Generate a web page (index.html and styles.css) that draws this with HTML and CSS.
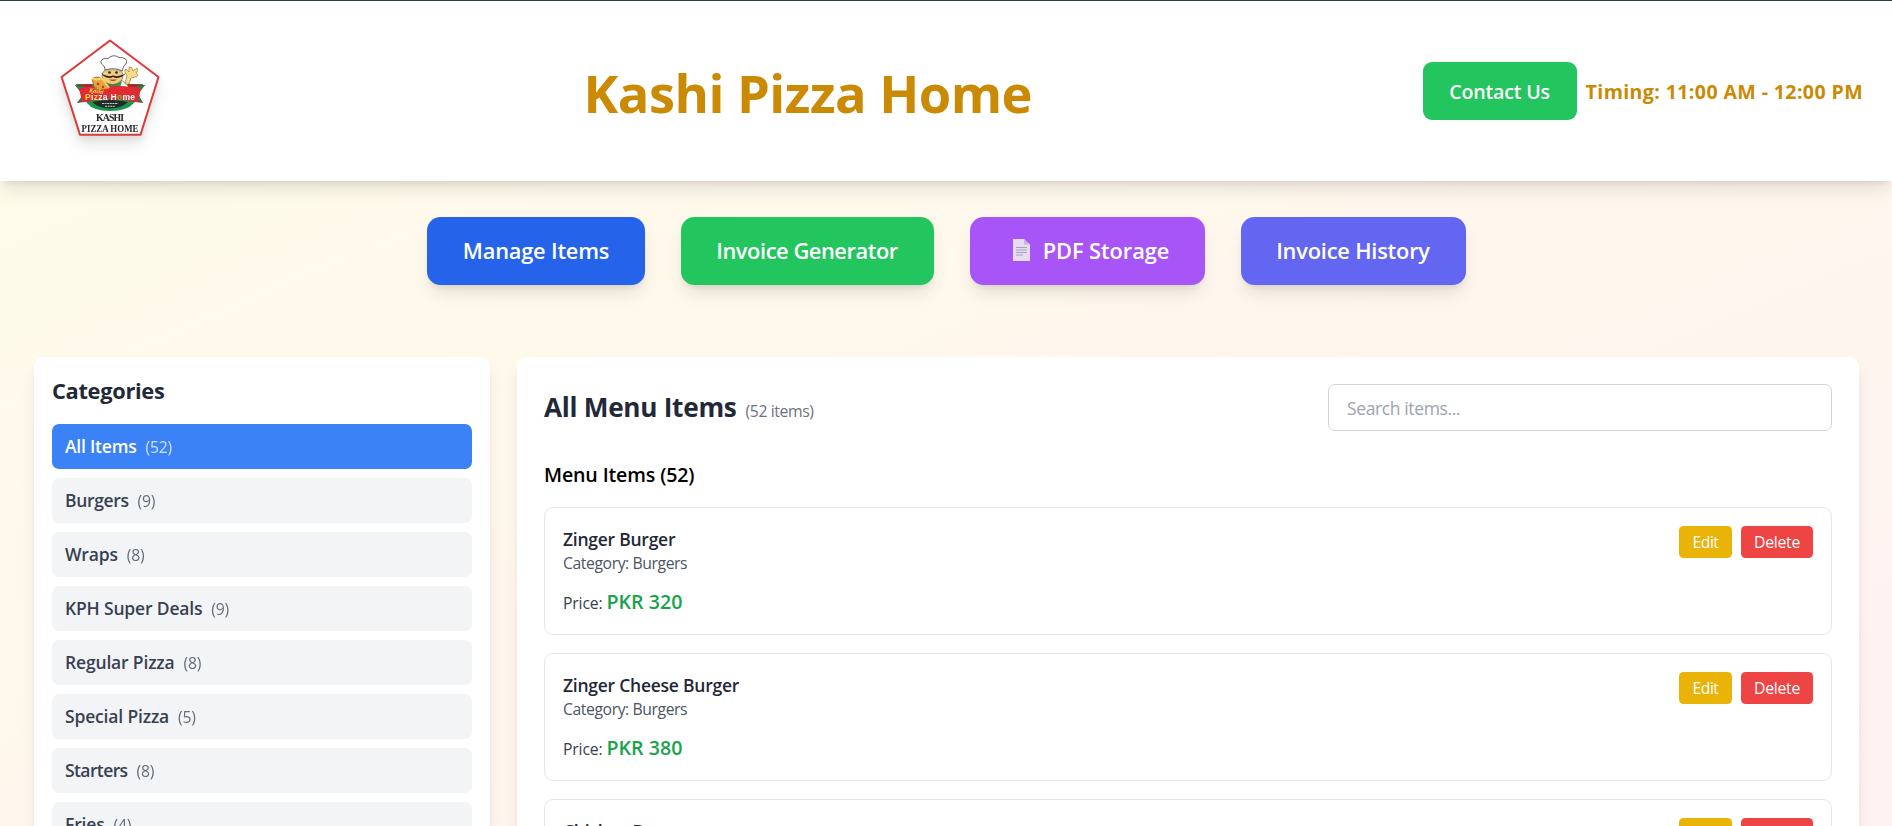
FILE: index.html
```
<!DOCTYPE html>
<html lang="en">
<head>
<meta charset="utf-8">
<title>Kashi Pizza Home</title>
<link rel="stylesheet" href="styles.css">
</head>
<body>
<header class="header">
  <div class="brand">
    <svg class="logo" viewBox="0 0 110 110" width="110" height="110" role="img" aria-label="Kashi Pizza Home">
      <path class="logo-frame" d="M55 5.500 L103.500 42 L85.500 99.700 H25 L6.600 42 Z"/>
      <!-- ribbon and green backing -->
      <path d="M21 49 L88 49 L79 68 Q72 76 55 76 Q38 76 32 68 Z" fill="#17954f"/>
      <path d="M20 50 L37 49 L36 66 L22 68 L28 60 Z M90 50 L73 49 L74 66 L88 68 L83 59 Z" fill="#b3202b"/>
      <path d="M20 50 L28 60 L22 68 L28 66 L30 52 Z M90 50 L83 59 L88 68 L81 65 L80 52 Z" fill="#1c8a4a"/>
      <!-- chef -->
      <g transform="translate(3 5)">
        <path d="M42 48 L46 41 L55 45 L63 40 L69 44 L71 48 Z" fill="#fff" stroke="#3a3a32" stroke-width=".6"/>
        <path d="M46 41 Q55 46 64 41 L62 48 H51 Z" fill="#26a257"/>
        <ellipse cx="54.500" cy="36" rx="10.500" ry="8.500" fill="#f2cd79" stroke="#5a4520" stroke-width=".6"/>
        <path d="M47 29 Q47 26 43.500 24 Q41 18 50 18.500 Q55 13.500 61 17.500 Q70 17 68.500 23.500 Q65 25 64.500 31 Q56 27 47 30 Z" fill="#fff" stroke="#444" stroke-width=".8"/>
        <path d="M48 31 Q56 28 64 32" fill="none" stroke="#aaa" stroke-width=".7"/>
        <circle cx="51.500" cy="32.500" r="1.300" fill="#222"/>
        <circle cx="58.500" cy="32.500" r="1.300" fill="#222"/>
        <path d="M43 33 Q49 38 55 35.500 Q61 38 68 33 Q62 40 55 37 Q48 40 43 33 Z" fill="#2b2015"/>
        <path d="M51 39.500 Q55 42.500 59 39.500 Z" fill="#c7382e"/>
      </g>
      <path d="M70 49 L72 40 Q68 36 71 34 L74 37 L74 32 Q77 31 78 36 L82 33 Q84 35 81 38 Q85 41 80 42 L76 43 L74 49 Z" fill="#f7dc8c" stroke="#a4792a" stroke-width=".7"/>
      <path d="M24 53 Q55 48 86 53 L83 67 Q55 62 27 67 Z" fill="#e12b32"/>
      <path d="M37 67 Q55 63 73 67 Q66 73.500 55 73.500 Q44 73.500 37 67 Z" fill="#222b25"/>
      <!-- pizza slice -->
      <path d="M37 44 Q42 40 47 44 L54 54 L40 55 Z" fill="#eca23a" stroke="#9c5b1c" stroke-width=".8"/>
      <path d="M37 43.500 L42 44.500 L47 43.500 L54 53" fill="none" stroke="#f8d36c" stroke-width="2"/>
      <circle cx="43" cy="49" r="1.300" fill="#b83b21"/>
      <circle cx="48" cy="52" r="1.200" fill="#b83b21"/>
      <circle cx="41" cy="53" r="1" fill="#658c33"/>
      <text class="logo-script" x="34" y="57" transform="rotate(8 34 57)">Kashi</text>
      <text class="logo-name" x="30" y="65.200" textLength="50"><tspan fill="#ffd93b">P</tspan><tspan fill="#fff">i</tspan><tspan fill="#ffd93b">z</tspan><tspan fill="#fff">za H</tspan><tspan fill="#62c83e">o</tspan><tspan fill="#fff">me</tspan></text>
      <path d="M47 68.500 h16 M50 71.300 h10" stroke="#c7ccc7" stroke-width="1" stroke-dasharray="2 .6"/>
      <text class="logo-serif" x="55" y="86.200" text-anchor="middle" textLength="28">KASHI</text>
      <text class="logo-serif" x="55" y="96.500" text-anchor="middle" textLength="57" lengthAdjust="spacingAndGlyphs">PIZZA HOME</text>
    </svg>
  </div>
  <h1 class="title">Kashi Pizza Home</h1>
  <div class="header-side">
    <button class="contact">Contact Us</button>
    <span class="timing">Timing: 11:00 AM - 12:00 PM</span>
  </div>
</header>

<nav class="nav">
  <button class="nav-btn blue">Manage Items</button>
  <button class="nav-btn green">Invoice Generator</button>
  <button class="nav-btn purple">
    <svg class="doc" viewBox="0 0 17 22" width="17" height="22" aria-hidden="true">
      <path d="M0 0 H11 L17 5.500 V22 H0 Z" fill="#e6dcf3"/>
      <path d="M11 0 L17 5.500 H11 Z" fill="#c3b5d3"/>
      <path d="M3 8.500 H14 M3 11 H14 M3 13.500 H14 M3 16 H10" stroke="#aa9fb9" stroke-width="1"/>
    </svg>
    <span>PDF Storage</span>
  </button>
  <button class="nav-btn indigo">Invoice History</button>
</nav>

<main class="layout">
  <aside class="sidebar">
    <h3 class="sidebar-title">Categories</h3>
    <ul class="cats">
      <li class="cat active">All Items<span class="count">(52)</span></li>
      <li class="cat tight">Burgers<span class="count">(9)</span></li>
      <li class="cat">Wraps<span class="count">(8)</span></li>
      <li class="cat">KPH Super Deals<span class="count">(9)</span></li>
      <li class="cat">Regular Pizza<span class="count">(8)</span></li>
      <li class="cat">Special Pizza<span class="count">(5)</span></li>
      <li class="cat tighter">Starters<span class="count">(8)</span></li>
      <li class="cat">Fries<span class="count">(4)</span></li>
    </ul>
  </aside>

  <section class="panel">
    <div class="panel-head">
      <h2 class="panel-title">All Menu Items<span class="panel-count">(52 items)</span></h2>
      <input class="search" type="text" placeholder="Search items...">
    </div>
    <h3 class="list-title">Menu Items (52)</h3>
    <div class="items">
      <article class="item">
        <div>
          <h4 class="item-name">Zinger Burger</h4>
          <p class="item-cat">Category: Burgers</p>
          <p class="item-price">Price: <span class="amount">PKR 320</span></p>
        </div>
        <div class="actions"><button class="btn edit">Edit</button><button class="btn delete">Delete</button></div>
      </article>
      <article class="item">
        <div>
          <h4 class="item-name">Zinger Cheese Burger</h4>
          <p class="item-cat">Category: Burgers</p>
          <p class="item-price">Price: <span class="amount">PKR 380</span></p>
        </div>
        <div class="actions"><button class="btn edit">Edit</button><button class="btn delete">Delete</button></div>
      </article>
      <article class="item">
        <div>
          <h4 class="item-name">Chicken Burger</h4>
        </div>
        <div class="actions"><button class="btn edit"></button><button class="btn delete"></button></div>
      </article>
    </div>
  </section>
</main>
</body>
</html>
```
FILE: styles.css
```
*, *::before, *::after { box-sizing: border-box; margin: 0; padding: 0; }

body {
  height: 826px;
  overflow: hidden;
  font-family: "Open Sans", "Noto Sans", sans-serif;
  font-size: 17.5px;
  line-height: 27px;
  color: #000;
  background: linear-gradient(to bottom right, #fefce8, #fff7ed, #fef2f2);
}
button { border: 0; color: #fff; font-family: inherit; }
ul { list-style: none; }

/* Header */
.header {
  display: flex;
  align-items: center;
  justify-content: space-between;
  height: 181px;
  padding: 0 29px 0 26px;
  border-top: 1px solid #2a3f47;
  background: #fff;
  box-shadow: 0 11px 17px -3px rgba(0,0,0,.1), 0 4.5px 7px -4px rgba(0,0,0,.1);
}
.brand { display: flex; justify-content: center; width: 167px; }
.logo { display: block; margin-bottom: 3px; filter: drop-shadow(0 9px 7px rgba(0,0,0,.09)) drop-shadow(0 3px 3px rgba(0,0,0,.08)); }
.logo-frame { fill: #fff; stroke: #d93a38; stroke-width: 2; stroke-linejoin: round; }
.logo-script { font: italic bold 6px "Liberation Serif", serif; fill: #ffe45c; }
.logo-name { font: bold 8.500px "Liberation Sans", sans-serif; }
.logo-serif { font: bold 9.800px "Liberation Serif", serif; fill: #252525; }
.title {
  margin-top: 3px;
  font-size: 52.4px;
  line-height: 54px;
  font-weight: 700;
  letter-spacing: -.51px;
  color: #ca8a04;
}
.header-side { display: flex; align-items: center; gap: 9px; }
.contact {
  width: 154px;
  height: 58px;
  border-radius: 9px;
  background: #22c55e;
  font-size: 19.6px;
  font-weight: 600;
  letter-spacing: -.19px;
}
.timing { font-size: 19.6px; font-weight: 700; letter-spacing: .37px; color: #ca8a04; white-space: nowrap; }

/* Section buttons */
.nav { display: flex; justify-content: center; gap: 36px; padding: 36px 0 72px; }
.nav-btn {
  display: flex;
  align-items: center;
  justify-content: center;
  height: 68px;
  padding-bottom: 2px;
  border-radius: 13.5px;
  font-size: 21.8px;
  font-weight: 600;
  letter-spacing: -.2px;
  box-shadow: 0 11px 17px -3px rgba(0,0,0,.1), 0 4.5px 7px -4px rgba(0,0,0,.1);
}
.blue { width: 218px; padding-left: 1px; background: #2563eb; }
.green { width: 253px; background: #22c55e; letter-spacing: -.42px; }
.purple { width: 235px; background: #a855f7; gap: 13px; padding-left: 8px; letter-spacing: -.05px; }
.indigo { width: 225px; background: #6366f1; }
.doc { display: block; }

/* Page columns */
.layout { display: flex; gap: 27px; margin: 0 33px 0 34px; }
.sidebar, .panel {
  height: 620px;
  border-radius: 9px;
  background: #fff;
  box-shadow: 0 11px 17px -3px rgba(0,0,0,.1), 0 4.5px 7px -4px rgba(0,0,0,.1);
}
.sidebar { flex: 0 0 456px; padding: 18px; }
.panel { flex: 1; padding: 27px; }

.sidebar-title {
  margin-bottom: 17px;
  font-size: 21.8px;
  line-height: 32px;
  font-weight: 700;
  letter-spacing: -.3px;
  color: #1f2937;
}
.cats { display: flex; flex-direction: column; gap: 9px; }
.cat {
  height: 45px;
  padding: 9px 13px;
  border-radius: 7px;
  background: #f3f4f6;
  color: #374151;
  font-weight: 600;
  letter-spacing: -.17px;
}
.cat.active { background: #3b82f6; color: #fff; letter-spacing: -.22px; }
.cat.tight { letter-spacing: -.36px; }
.cat.tighter { letter-spacing: -.6px; }
.count { margin-left: 9px; font-size: 15.75px; font-weight: 400; letter-spacing: -.2px; opacity: .75; }

/* Menu panel */
.panel-head { display: flex; justify-content: space-between; align-items: center; margin-bottom: 27px; }
.panel-title { padding-top: 3px; font-size: 26.2px; line-height: 36px; font-weight: 700; letter-spacing: -.28px; color: #1f2937; }
.panel-count { margin-left: 9px; font-size: 15.75px; font-weight: 400; letter-spacing: -.4px; color: #6b7280; }
.search {
  width: 504px;
  height: 47px;
  padding: 0 18px;
  border: 1px solid #d1d5db;
  border-radius: 7px;
  font: 17.5px "Open Sans", sans-serif;
  letter-spacing: -.38px;
  background: #fff;
}
.search::placeholder { color: #9ca3af; }
.list-title { padding-top: 1px; margin-bottom: 17px; font-size: 19.6px; line-height: 31px; font-weight: 600; letter-spacing: -.14px; }
.items { display: flex; flex-direction: column; gap: 18px; }
.item {
  display: flex;
  justify-content: space-between;
  align-items: flex-start;
  height: 128px;
  padding: 18px;
  border: 1px solid #e5e7eb;
  border-radius: 9px;
}
.item-name { font-size: 17.5px; line-height: 26px; font-weight: 600; letter-spacing: -.25px; color: #1f2937; }
.item-cat { font-size: 15.75px; line-height: 22px; letter-spacing: -.42px; color: #4b5563; }
.item-price { margin-top: 12px; font-size: 15.75px; line-height: 31px; font-weight: 500; letter-spacing: -.15px; color: #374151; }
.amount { font-size: 19.6px; font-weight: 600; letter-spacing: .05px; color: #16a34a; }
.actions { display: flex; gap: 9px; }
.btn { height: 32px; padding-bottom: 1px; border-radius: 4.5px; font-size: 15.75px; }
.edit { width: 53px; background: #eab308; letter-spacing: -.5px; }
.delete { width: 72px; background: #ef4444; letter-spacing: -.25px; }
```
